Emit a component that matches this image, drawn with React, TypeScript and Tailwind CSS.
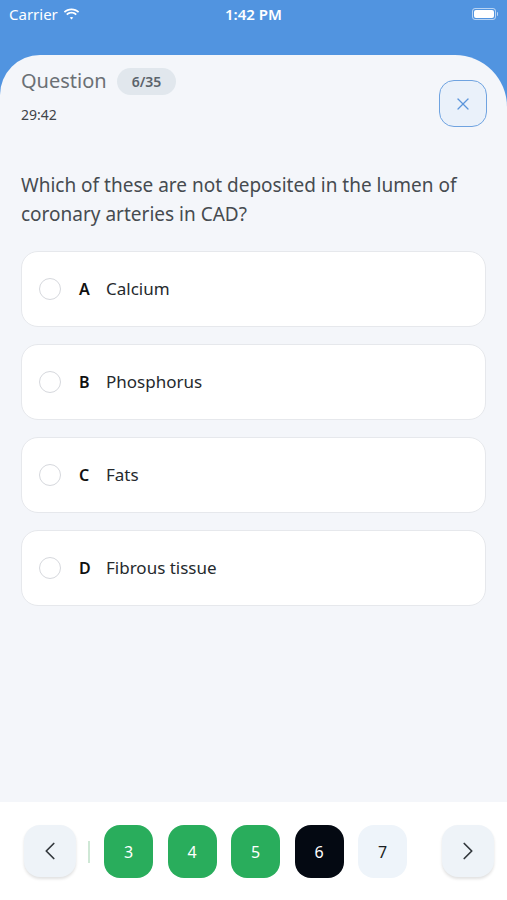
import { ChevronLeft, ChevronRight, X } from 'lucide-react';

const options = [
  { key: 'A', text: 'Calcium' },
  { key: 'B', text: 'Phosphorus' },
  { key: 'C', text: 'Fats' },
  { key: 'D', text: 'Fibrous tissue' },
];

const pages = [
  { n: 3, state: 'done' },
  { n: 4, state: 'done' },
  { n: 5, state: 'done' },
  { n: 6, state: 'current' },
  { n: 7, state: 'todo' },
];

function StatusBar() {
  return (
    <div className="relative flex h-[28px] items-center justify-between px-[9px] text-white">
      <div className="flex items-center gap-[5px] text-[15px]">
        <span>Carrier</span>
        <svg width="17" height="12" viewBox="0 0 17 12" fill="white">
          <path d="M8.5 2.2c2.5 0 4.8 1 6.5 2.6l1.2-1.3C14.2 1.6 11.5.4 8.5.4S2.8 1.6.8 3.5L2 4.8c1.7-1.6 4-2.6 6.5-2.6z" />
          <path d="M8.5 5.6c1.6 0 3 .6 4.1 1.6l1.2-1.3C12.4 4.6 10.5 3.8 8.5 3.8S4.6 4.6 3.2 5.9l1.2 1.3c1.1-1 2.5-1.6 4.1-1.6z" />
          <path d="M8.5 8.9c.7 0 1.3.3 1.8.7L8.5 11.6 6.7 9.6c.5-.4 1.1-.7 1.8-.7z" />
        </svg>
      </div>
      <span className="absolute left-1/2 -translate-x-1/2 text-[15px] font-semibold">1:42 PM</span>
      <div className="flex items-center">
        <div className="h-[12px] w-[24px] rounded-[3px] border border-white/60 p-[1px]">
          <div className="h-full w-full rounded-[2px] bg-white" />
        </div>
        <div className="ml-[1px] h-[4px] w-[1.5px] rounded-r bg-white/60" />
      </div>
    </div>
  );
}

export default function App() {
  return (
    <div
      className="flex h-[900px] w-[507px] flex-col overflow-hidden bg-[#5194e0]"
      style={{ fontFamily: '"Noto Sans", "Open Sans", sans-serif' }}
    >
      <StatusBar />
      <div className="mt-[27px] flex flex-1 flex-col overflow-hidden rounded-tl-[40px] rounded-tr-[52px] bg-[#f4f6fa]">
        {/* header */}
        <div className="flex items-start justify-between pl-[21px] pr-[20px] pt-[11px]">
          <div>
            <div className="flex items-center gap-[10px]">
              <span className="text-[20px] text-[#6b7075]">Question</span>
              <span className="rounded-full bg-[#e1e7ed] px-[15px] py-[3px] text-[14px] font-semibold text-[#5b636b]">
                6/35
              </span>
            </div>
            <div className="mt-[8px] text-[14px] text-[#3f4449]">29:42</div>
          </div>
          <button className="mt-[14px] flex h-[47px] w-[48px] items-center justify-center rounded-[15px] border-[1.5px] border-[#6fa3e0] bg-[#eaf1fa]">
            <X size={20} strokeWidth={1.5} className="text-[#5b95db]" />
          </button>
        </div>

        {/* question */}
        <p className="mt-[44px] px-[21px] text-[19px] leading-[29px] text-[#464b50]">
          Which of these are not deposited in the lumen of coronary arteries in CAD?
        </p>

        <div className="mt-[22px] flex flex-col gap-[17px] px-[21px]">
          {options.map((o) => (
            <div
              key={o.key}
              className="flex h-[76px] items-center rounded-[17px] border border-[#e6e8ec] bg-white pl-[17px]"
            >
              <div className="h-[22px] w-[22px] rounded-full border-[1.5px] border-[#d6d8dd]" />
              <span className="ml-[18px] w-[27px] text-[16px] font-semibold text-[#111]">{o.key}</span>
              <span className="text-[17px] text-[#25292d]">{o.text}</span>
            </div>
          ))}
        </div>

        <div className="flex-1" />

        {/* pager */}
        <div className="flex h-[98px] items-start bg-white pl-[24px] pr-[13px] pt-[23px]">
          <button className="flex h-[52px] w-[52px] items-center justify-center rounded-[16px] bg-[#eef3f8] shadow-[0_2px_3px_rgba(0,0,0,0.12)]">
            <ChevronLeft size={30} strokeWidth={1.4} className="text-[#33383d]" />
          </button>
          <div className="ml-[12px] mt-[16px] h-[22px] w-[2px] bg-[#cfe8d6]" />
          <div className="ml-[14px] flex gap-[14.5px]">
            {pages.map((p) => (
              <div
                key={p.n}
                className={
                  p.state === 'done'
                    ? 'flex h-[53px] w-[49px] items-center justify-center rounded-[16px] bg-[#29ad5c] text-[16px] text-white'
                    : p.state === 'current'
                      ? 'flex h-[53px] w-[49px] items-center justify-center rounded-[16px] bg-[#040912] text-[16px] text-white'
                      : 'flex h-[53px] w-[49px] items-center justify-center rounded-[16px] bg-[#eef4fa] text-[16px] text-[#1b1f23]'
                }
              >
                {p.n}
              </div>
            ))}
          </div>
          <button className="ml-auto flex h-[52px] w-[52px] items-center justify-center rounded-[16px] bg-[#eef3f8] shadow-[0_2px_3px_rgba(0,0,0,0.12)]">
            <ChevronRight size={30} strokeWidth={1.4} className="text-[#33383d]" />
          </button>
        </div>
      </div>
    </div>
  );
}
